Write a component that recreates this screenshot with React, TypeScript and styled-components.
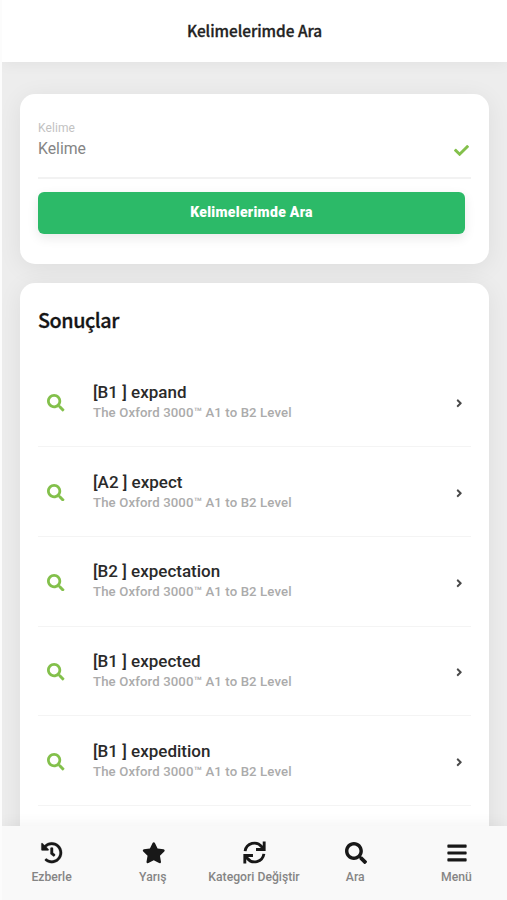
import React from "react";
import styled, { createGlobalStyle } from "styled-components";
import { FaAngleRight, FaBars, FaCheck, FaHistory, FaSearch, FaStar } from "react-icons/fa";

const GlobalStyle = createGlobalStyle`
  *, *::before, *::after { box-sizing: border-box; }
  body { margin: 0; background: #fff; }
`;

const titleFont = `"Noto Sans CJK SC", "Open Sans", sans-serif`;

const Screen = styled.div`
  position: relative;
  display: flex;
  flex-direction: column;
  height: 900px;
  overflow: hidden;
  border-left: 2px solid #fcfcfc;
  background: #ededed;
  font-family: Roboto, "Liberation Sans", sans-serif;
`;

const Header = styled.header`
  z-index: 1;
  display: flex;
  flex: none;
  align-items: center;
  justify-content: center;
  height: 62px;
  padding-bottom: 2px;
  background: #fff;
  box-shadow: 0 2px 14px rgba(0, 0, 0, 0.05);
`;

const HeaderTitle = styled.h1`
  margin: 0;
  font: 500 15.4px/24px ${titleFont};
  letter-spacing: -0.03px;
  color: #222;
  -webkit-text-stroke: 0.3px #222;
`;

const Content = styled.main`
  display: flex;
  flex: 1;
  flex-direction: column;
  gap: 19px;
  min-height: 0;
  padding: 32px 18px 0;
`;

const Card = styled.section`
  flex: none;
  padding: 0 18px;
  border-radius: 15px;
  background: #fff;
  box-shadow: 0 4px 24px rgba(0, 0, 0, 0.07);
`;

const SearchCard = styled(Card)`
  height: 169.5px;
`;

const ResultsCard = styled(Card)`
  padding-bottom: 110px;
`;

const Field = styled.div`
  display: flex;
  align-items: flex-start;
  justify-content: space-between;
  height: 84.5px;
  padding-top: 26px;
  border-bottom: 2px solid #f2f2f2;
`;

const FieldText = styled.label`
  display: flex;
  flex-direction: column;
`;

const FieldLabel = styled.span`
  font-size: 12px;
  line-height: 16px;
  letter-spacing: 0.1px;
  color: #c2c2c2;
`;

const FieldValue = styled.span`
  padding-top: 1px;
  font-size: 15.8px;
  line-height: 24px;
  color: #858585;
`;

const FieldMark = styled.span`
  display: flex;
  padding: 23px 2px 0 0;
  font-size: 15px;
  color: #83c04b;
`;

const SubmitButton = styled.button`
  display: block;
  width: 427px;
  height: 42px;
  margin: 13px 0 0;
  padding: 0;
  border: 0;
  border-radius: 6px;
  background: #2cba68;
  box-shadow: 0 4px 12px rgba(0, 0, 0, 0.09);
  color: #fff;
  font: 900 14px/41px Roboto, sans-serif;
  letter-spacing: 0.3px;
`;

const ResultsTitle = styled.h2`
  margin: 0;
  padding-top: 21px;
  height: 75.2px;
  font: 500 19.8px/32px ${titleFont};
  letter-spacing: -0.45px;
  color: #151515;
  -webkit-text-stroke: 0.3px #151515;
`;

const ResultRow = styled.div`
  display: grid;
  grid-template-columns: 55px 1fr 18.5px;
  align-items: center;
  height: 89.7px;
  border-bottom: 1px solid #f4f4f4;
`;

const ResultIcon = styled.span`
  display: flex;
  padding: 2px 0 0 9.4px;
  font-size: 17.5px;
  color: #83c04b;
`;

const ResultText = styled.div`
  display: flex;
  flex-direction: column;
`;

const Word = styled.span`
  font-size: 17px;
  font-weight: 500;
  line-height: 22px;
  color: #2a2a2a;
`;

const Level = styled.span`
  font-size: 13.2px;
  font-weight: 500;
  line-height: 20px;
  letter-spacing: 0.12px;
  color: #ababab;
`;

const Chevron = styled.span`
  display: flex;
  padding-top: 3px;
  font-size: 12.5px;
  color: #4a4a4a;
`;

const TabBar = styled.nav`
  position: absolute;
  right: 0;
  bottom: 0;
  left: -1px;
  display: grid;
  grid-template-columns: repeat(5, 1fr);
  height: 74px;
  background: rgba(249, 249, 249, 0.985);
  box-shadow: 0 -2px 14px rgba(0, 0, 0, 0.05);
`;

const Tab = styled.a`
  display: flex;
  flex-direction: column;
  align-items: center;
  gap: 5px;
  padding-top: 15px;
  color: #858585;
  font-size: 12.2px;
  font-weight: 500;
  line-height: 16px;
  white-space: nowrap;
`;

const TabIcon = styled.span<{ $size?: number }>`
  display: flex;
  align-items: center;
  height: 23px;
  padding-left: 1px;
  font-size: ${({ $size = 22 }) => $size}px;
  color: #181818;
`;

const HistoryIcon = styled(FaHistory)`
  overflow: visible;
  stroke-width: 5;
`;

const RefreshIcon = () => (
  <svg width="23" height="23" viewBox="0 0 24 24" fill="none" stroke="currentColor" strokeWidth="3">
    <path d="M2.2 10.6A9.8 9.8 0 0 1 19.6 6L21.8 8.6" />
    <path d="M22.1 0.6V8.9H13.6" />
    <path d="M21.8 13.4A9.8 9.8 0 0 1 4.4 18L2.2 15.4" />
    <path d="M1.9 23.4V15.1H10.4" />
  </svg>
);

const words = [
  "[B1 ] expand",
  "[A2 ] expect",
  "[B2 ] expectation",
  "[B1 ] expected",
  "[B1 ] expedition",
];

const tabs = [
  { label: "Ezberle", icon: <HistoryIcon />, size: 21.5 },
  { label: "Yarış", icon: <FaStar />, size: 23.5 },
  { label: "Kategori Değiştir", icon: <RefreshIcon /> },
  { label: "Ara", icon: <FaSearch /> },
  { label: "Menü", icon: <FaBars /> },
];

export default function App() {
  return (
    <>
      <GlobalStyle />
      <Screen>
        <Header>
          <HeaderTitle>Kelimelerimde Ara</HeaderTitle>
        </Header>
        <Content>
          <SearchCard>
            <Field>
              <FieldText>
                <FieldLabel>Kelime</FieldLabel>
                <FieldValue>Kelime</FieldValue>
              </FieldText>
              <FieldMark><FaCheck /></FieldMark>
            </Field>
            <SubmitButton type="button">Kelimelerimde Ara</SubmitButton>
          </SearchCard>
          <ResultsCard>
            <ResultsTitle>Sonuçlar</ResultsTitle>
            {words.map((word) => (
              <ResultRow key={word}>
                <ResultIcon><FaSearch /></ResultIcon>
                <ResultText>
                  <Word>{word}</Word>
                  <Level>The Oxford 3000™ A1 to B2 Level</Level>
                </ResultText>
                <Chevron><FaAngleRight /></Chevron>
              </ResultRow>
            ))}
          </ResultsCard>
        </Content>
        <TabBar>
          {tabs.map(({ label, icon, size }) => (
            <Tab key={label}>
              <TabIcon $size={size}>{icon}</TabIcon>
              {label}
            </Tab>
          ))}
        </TabBar>
      </Screen>
    </>
  );
}
